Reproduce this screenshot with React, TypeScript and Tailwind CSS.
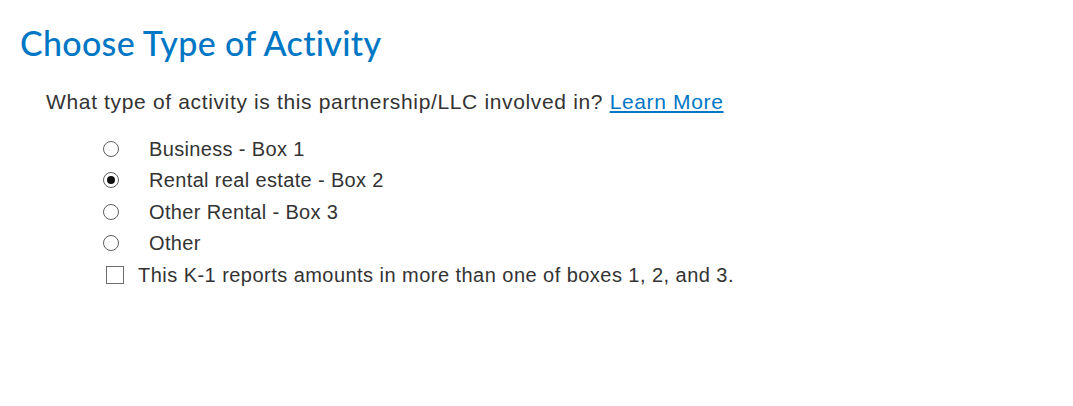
import React, { useState } from 'react';

const options = [
  'Business - Box 1',
  'Rental real estate - Box 2',
  'Other Rental - Box 3',
  'Other',
];

const App: React.FC = () => {
  const [selected, setSelected] = useState(1);
  const [multi, setMulti] = useState(false);

  return (
    <div className="min-h-screen bg-white pl-5 pt-[22px] font-['Liberation_Sans',Arial,sans-serif] text-[#333333]">
      <h1 className="font-['Lato',sans-serif] text-[34px] leading-[42px] font-medium tracking-[0.3px] text-[#0077c5]">
        Choose Type of Activity
      </h1>

      <p className="mt-[22px] pl-[26px] text-[21px] leading-[32px] tracking-[0.65px]">
        What type of activity is this partnership/LLC involved in?{' '}
        <a href="#" className="text-[#0077c5] underline">
          Learn More
        </a>
      </p>

      <div className="mt-[15px] flex flex-col pl-[83px] text-[20px] tracking-[0.35px]">
        {options.map((label, i) => (
          <label
            key={label}
            className="flex h-[31.5px] cursor-pointer items-center"
            onClick={() => setSelected(i)}
          >
            <span className="w-[46px]">
              <span className="flex h-[16px] w-[16px] items-center justify-center rounded-full border border-[#5f5f5f] bg-white">
                {selected === i && <span className="h-[8px] w-[8px] rounded-full bg-[#111111]" />}
              </span>
            </span>
            <span>{label}</span>
          </label>
        ))}
        <label
          className="flex h-[31.5px] cursor-pointer items-center"
          onClick={() => setMulti(!multi)}
        >
          <span className="ml-[3px] mr-[14px] h-[18px] w-[18px] border border-[#6b6b6b] bg-white">
            {multi && <span className="block h-full w-full bg-[#0077c5]" />}
          </span>
          <span className="tracking-[0.46px]">This K-1 reports amounts in more than one of boxes 1, 2, and 3.</span>
        </label>
      </div>
    </div>
  );
};

export default App;
